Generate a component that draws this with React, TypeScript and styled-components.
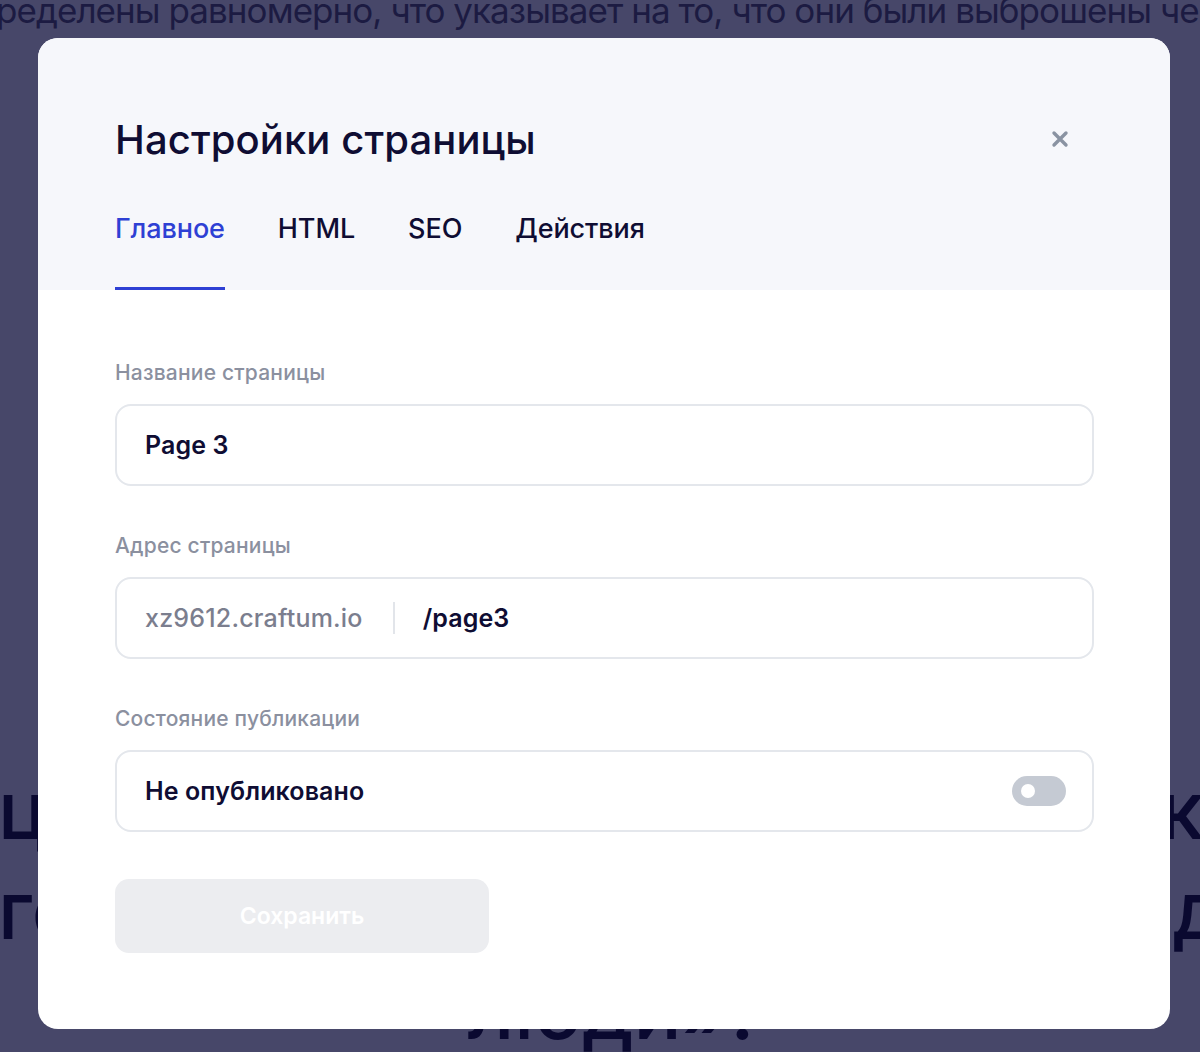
import React from "react";
import styled, { createGlobalStyle } from "styled-components";

const Global = createGlobalStyle`
  * { box-sizing: border-box; }
  html, body { margin: 0; padding: 0; }
  body {
    width: 1200px;
    height: 1052px;
    overflow: hidden;
    background: #474769;
    font-family: Inter, "Noto Sans", "Liberation Sans", sans-serif;
  }
`;

const Page = styled.div`
  position: relative;
  width: 1200px;
  height: 1052px;
  overflow: hidden;
`;

const BackText = styled.p`
  margin: -10px 0 0 -4px;
  white-space: nowrap;
  font-size: 35px;
  line-height: 40px;
  font-weight: 400;
  letter-spacing: -0.95px;
  color: #1c1b42;
`;

const Heading = styled.div`
  margin-top: 730px;
  display: flex;
  flex-direction: column;
  font-size: 80px;
  line-height: 100px;
  font-weight: 500;
  color: #0a0930;
`;

const HeadLine = styled.div<{ $center?: boolean }>`
  display: flex;
  justify-content: ${(p) => (p.$center ? "center" : "space-between")};
  margin: 0 -24px 0 -2px;
  white-space: nowrap;
`;

const Overlay = styled.div`
  position: absolute;
  left: 38px;
  top: 38px;
  width: 1132px;
  height: 991px;
  background: #ffffff;
  border-radius: 20px;
  overflow: hidden;
  display: flex;
  flex-direction: column;
`;

const Header = styled.div`
  background: #f6f7fb;
  height: 252px;
  padding: 0 100px 0 77px;
  display: flex;
  flex-direction: column;
`;

const TitleRow = styled.div`
  display: flex;
  align-items: center;
  justify-content: space-between;
  margin-top: 77px;
  height: 48px;
`;

const Title = styled.h1`
  margin: 0;
  font-size: 40px;
  font-weight: 500;
  letter-spacing: 0.1px;
  color: #0f0d33;
`;

const CloseButton = styled.button`
  border: 0;
  background: none;
  padding: 0;
  width: 20px;
  height: 20px;
  display: flex;
  align-items: center;
  justify-content: center;
  cursor: pointer;
`;

const Tabs = styled.div`
  display: flex;
  gap: 53px;
  margin-top: auto;
`;

const Tab = styled.div<{ $active?: boolean }>`
  font-size: 27px;
  font-weight: 500;
  letter-spacing: -0.1px;
  color: ${(p) => (p.$active ? "#2e40d4" : "#0f0d33")};
  padding-bottom: 42px;
  border-bottom: 3px solid ${(p) => (p.$active ? "#2e40d4" : "transparent")};
  line-height: 32px;
`;

const Body = styled.div`
  padding: 71px 76px 0 77px;
  display: flex;
  flex-direction: column;
  gap: 48px;
`;

const Field = styled.div`
  display: flex;
  flex-direction: column;
  gap: 19px;
`;

const Label = styled.div`
  font-size: 21px;
  line-height: 24px;
  font-weight: 500;
  letter-spacing: 0.2px;
  color: #8b909f;
`;

const InputBox = styled.div`
  height: 82px;
  border: 2px solid #e4e7ec;
  border-radius: 16px;
  padding: 0 26px 0 28px;
  display: flex;
  align-items: center;
`;

const Value = styled.span`
  font-size: 25px;
  font-weight: 600;
  letter-spacing: 0.1px;
  color: #0f0d33;
`;

const Domain = styled.span`
  font-size: 25px;
  font-weight: 500;
  letter-spacing: 0.2px;
  color: #7b7e8e;
`;

const Divider = styled.span`
  width: 2px;
  height: 32px;
  background: #e2e5ea;
  margin: 0 28px 0 30px;
`;

const Spacer = styled.div`
  flex: 1;
`;

const Toggle = styled.div`
  width: 54px;
  height: 30px;
  border-radius: 15px;
  background: #c5cad3;
  display: flex;
  align-items: center;
  padding-left: 9px;
`;

const Knob = styled.span`
  width: 14px;
  height: 14px;
  border-radius: 50%;
  background: #ffffff;
`;

const SaveButton = styled.button`
  margin-top: -1px;
  width: 374px;
  height: 74px;
  border: 0;
  border-radius: 14px;
  background: #ecedf0;
  color: #ffffff;
  font-family: inherit;
  font-size: 23px;
  font-weight: 600;
`;

export default function App() {
  return (
    <>
      <Global />
      <Page>
        <BackText>
          ределены равномерно, что указывает на то, что они были выброшены через
        </BackText>
        <Heading>
          <HeadLine>
            <span>ца</span>
            <span>которая помогает искать</span>
            <span>кі</span>
          </HeadLine>
          <HeadLine>
            <span>го</span>
            <span>пропавших без вести</span>
            <span>д</span>
          </HeadLine>
          <HeadLine $center>
            <span>люди».</span>
          </HeadLine>
        </Heading>
        <Overlay>
          <Header>
            <TitleRow>
              <Title>Настройки страницы</Title>
              <CloseButton aria-label="Закрыть">
                <svg width="18" height="18" viewBox="0 0 18 18">
                  <path
                    d="M3 3 L15 15 M15 3 L3 15"
                    stroke="#8a93a2"
                    strokeWidth="3.4"
                    strokeLinecap="round"
                  />
                </svg>
              </CloseButton>
            </TitleRow>
            <Tabs>
              <Tab $active>Главное</Tab>
              <Tab>HTML</Tab>
              <Tab>SEO</Tab>
              <Tab>Действия</Tab>
            </Tabs>
          </Header>
          <Body>
            <Field>
              <Label>Название страницы</Label>
              <InputBox>
                <Value>Page 3</Value>
              </InputBox>
            </Field>
            <Field>
              <Label>Адрес страницы</Label>
              <InputBox>
                <Domain>xz9612.craftum.io</Domain>
                <Divider />
                <Value>/page3</Value>
              </InputBox>
            </Field>
            <Field>
              <Label>Состояние публикации</Label>
              <InputBox>
                <Value>Не опубликовано</Value>
                <Spacer />
                <Toggle>
                  <Knob />
                </Toggle>
              </InputBox>
            </Field>
            <SaveButton>Сохранить</SaveButton>
          </Body>
        </Overlay>
      </Page>
    </>
  );
}
